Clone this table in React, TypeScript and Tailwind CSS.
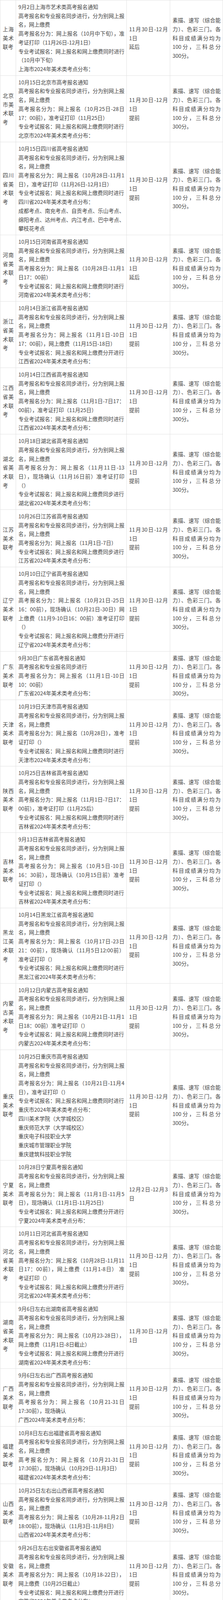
const SYNC = ["高考报名和专业报名同步进行，分为别网上报", "名，网上缴费"];
const SCORE = ["素描、速写（综合能", "力）、色彩三门。各", "科目成绩满分均为", "100分，三科总分", "300分。"];
const D1 = ["11月30日-12月", "1日"];
const D2 = ["12月2日-12月3", "日"];

type Row = {
  name: string[];
  info: string[][];
  date: string[];
  note?: string;
};

const rows: Row[] = [
  {
    name: ["上海", "美术", "联考"],
    info: [
      ["9月2日上海市艺术类高考报名通知"],
      SYNC,
      ["高考报名分为：网上报名（10月中下旬），准", "考证打印（11月26日-12月1日）"],
      ["专业考试报名：网上报名和网上缴费同时进行", "（10月中下旬）"],
      ["上海市2024年美术类考点分布："],
    ],
    date: D1,
    note: "延后",
  },
  {
    name: ["北京", "市美", "术联", "考"],
    info: [
      ["10月15日北京市高考报名通知"],
      SYNC,
      ["高考报名分为：网上报名（10月25日-28日", "17：00前），准考证打印（11月25日）"],
      ["专业考试报名：网上报名和网上缴费同时进行"],
      ["北京市2024年美术类考点分布："],
    ],
    date: D1,
    note: "提前",
  },
  {
    name: ["四川", "省美", "术联", "考"],
    info: [
      ["10月15日四川省高考报名通知"],
      SYNC,
      ["高考报名分为：网上报名（10月28日-11月1", "日），准考证打印（11月26日-12月1日）"],
      ["专业考试报名：网上报名和网上缴费同时进行"],
      ["四川省2024年美术类考点分布："],
      ["成都考点、南充考点、自贡考点、乐山考点、", "绵阳考点、达州考点、内江考点、巴中考点、", "攀枝花考点"],
    ],
    date: D1,
    note: "提前",
  },
  {
    name: ["河南", "省美", "术联", "考"],
    info: [
      ["10月15日河南省高考报名通知"],
      SYNC,
      ["高考报名分为：网上报名（10月28日-11月1", "日17：00前）"],
      ["专业考试报名：网上报名和网上缴费同时进行"],
      ["河南省2024年美术类考点分布："],
    ],
    date: D1,
    note: "延后",
  },
  {
    name: ["浙江", "省美", "术联", "考"],
    info: [
      ["10月14日浙江省高考报名通知"],
      SYNC,
      ["高考报名分为：网上报名（11月1日-10日", "17：00前），网上缴费（11月15日-18日）"],
      ["专业考试报名：网上报名和网上缴费分开进行"],
      ["江西省2024年美术类考点分布："],
    ],
    date: D1,
    note: "提前",
  },
  {
    name: ["江西", "省美", "术联", "考"],
    info: [
      ["10月14日江西省高考报名通知"],
      SYNC,
      ["高考报名分为：网上报名（11月1日-7日17：", "00前），准考证打印（11月25日）"],
      ["专业考试报名：网上报名和网上缴费同时进行"],
      ["江西省2024年美术类考点分布："],
    ],
    date: D1,
    note: "提前",
  },
  {
    name: ["湖北", "省美", "术联", "考"],
    info: [
      ["10月18日湖北省高考报名通知"],
      SYNC,
      ["高考报名分为：网上报名（11月11日-13", "日），现场确认（11月16日前）准考证打印", "（）"],
      ["专业考试报名：网上报名和网上缴费同步进行"],
      ["湖北省2024年美术类考点分布："],
    ],
    date: D1,
    note: "提前",
  },
  {
    name: ["江苏", "美术", "联考"],
    info: [
      ["10月26日江苏省高考报名通知"],
      SYNC,
      ["高考报名分为：网上报名（11月1日-7日）"],
      ["专业考试报名：网上报名和网上缴费同步进行"],
      ["江苏省2024年美术类考点分布："],
    ],
    date: D1,
    note: "提前",
  },
  {
    name: ["辽宁", "美术", "联考"],
    info: [
      ["10月10日辽宁省高考报名通知"],
      SYNC,
      [
        "高考报名分为：网上报名（10月21日-25日",
        "16：00前），现场确认（10月21日-30日）网",
        "上缴费（11月9-10日16：00前）准考证打印",
        "（）",
      ],
      ["专业考试报名：网上报名和网上缴费分开进行"],
      ["辽宁省2024年美术类考点分布："],
    ],
    date: D1,
    note: "提前",
  },
  {
    name: ["广东", "美术", "联考"],
    info: [
      ["9月30日广东省高考报名通知"],
      ["高考报名和专业报名同步进行"],
      ["高考报名分为：网上报名（11月1日-10日", "10：00前）"],
      ["广东省2024年美术类考点分布："],
    ],
    date: D1,
    note: "提前",
  },
  {
    name: ["天津", "美术", "联考"],
    info: [
      ["10月19日天津市高考报名通知"],
      SYNC,
      ["高考报名分为：网上报名（10月28日），准考", "证打印（）"],
      ["专业考试报名：网上报名和网上缴费同时进行"],
      ["天津市2024年美术类考点分布："],
    ],
    date: D1,
    note: "提前",
  },
  {
    name: ["陕西", "美术", "联考"],
    info: [
      ["10月25日吉林省高考报名通知"],
      SYNC,
      ["高考报名分为：网上报名（11月1日-7日17：", "00前），准考证打印（11月25后）"],
      ["专业考试报名：网上报名和网上缴费同时进行"],
      ["吉林省2024年美术类考点分布："],
    ],
    date: D1,
    note: "提前",
  },
  {
    name: ["吉林", "美术", "联考"],
    info: [
      ["9月13日吉林省高考报名通知"],
      SYNC,
      ["高考报名分为：网上报名（10月5日-10日", "16：30前），现场确认（10月15日前）准考", "证打印（）"],
      ["专业考试报名：网上报名和网上缴费同时进行"],
      ["吉林省2024年美术类考点分布："],
    ],
    date: D1,
    note: "提前",
  },
  {
    name: ["黑龙", "江美", "术联", "考"],
    info: [
      ["10月14日黑龙江省高考报名通知"],
      SYNC,
      ["高考报名分为：网上报名（10月17日-23日", "21：00前），现场确认（11月5日12:00前）", "准考证打印（）"],
      ["专业考试报名：网上报名和网上缴费同时进行"],
      ["黑龙江省2024年美术类考点分布："],
    ],
    date: D1,
    note: "提前",
  },
  {
    name: ["内蒙", "古美", "术联", "考"],
    info: [
      ["10月12日内蒙古高考报名通知"],
      SYNC,
      ["高考报名分为：网上报名（10月21日-11月1", "日18：00前）准考证打印（）"],
      ["专业考试报名：网上报名和网上缴费同时进行"],
      ["内蒙古2024年美术类考点分布："],
    ],
    date: D1,
    note: "提前",
  },
  {
    name: ["重庆", "美术", "联考"],
    info: [
      ["10月25日重庆市高考报名通知"],
      SYNC,
      ["高考报名分为：网上报名（10月21日-11月4", "日），准考证打印（）"],
      ["专业考试报名：网上报名和网上缴费同时进行"],
      ["重庆市2024年美术类考点分布："],
      ["四川美术学院（大学城校区）"],
      ["重庆师范大学（大学城校区）"],
      ["重庆电子科技职业大学"],
      ["重庆城市管理职业学院"],
      ["重庆建筑科技职业学院"],
    ],
    date: D1,
    note: "提前",
  },
  {
    name: ["宁夏", "美术", "联考"],
    info: [
      ["10月28日宁夏高考报名通知"],
      SYNC,
      ["高考报名分为：网上报名（11月1日-11月5", "日），现场确认（11月1日-11月25日）"],
      ["专业考试报名：网上报名和网上缴费分开进行"],
      ["宁夏2024年美术类考点分布："],
    ],
    date: D2,
  },
  {
    name: ["河北", "省美", "术联", "考"],
    info: [
      ["10月11日河北省高考报名通知"],
      SYNC,
      ["高考报名分为：网上报名（10月28日-11月11", "日17：00前），网上缴费（11月1-8日） 准", "考证打印（）"],
      ["专业考试报名：网上报名和网上缴费分开进行"],
      ["河北省2024年美术类考点分布："],
    ],
    date: D1,
    note: "提前",
  },
  {
    name: ["湖南", "省美", "术联", "考"],
    info: [
      ["9月6日左右出湖南省高考报名通知"],
      SYNC,
      ["高考报名分为：网上报名（10月23-28日），", "网上缴费（11月1日-8日截止）"],
      ["专业考试报名：网上报名和网上缴费分开进行"],
      ["湖南省2024年美术类考点分布："],
    ],
    date: D1,
  },
  {
    name: ["广西", "美术", "联考"],
    info: [
      ["9月6日左右出广西高考报名通知"],
      SYNC,
      ["高考报名分为：网上报名（10月21-31日", "17:30前），现场确认"],
      ["广西2024年美术类考点分布："],
    ],
    date: D1,
    note: "提前",
  },
  {
    name: ["福建", "美术", "联考"],
    info: [
      ["10月8日左右出福建省高考报名通知"],
      SYNC,
      ["高考报名分为：网上报名（10月21-31日", "17:30前），现场确认（10月29日-11月3日）"],
      ["福建省2024年美术类考点分布："],
    ],
    date: D1,
    note: "提前",
  },
  {
    name: ["山西", "美术", "联考"],
    info: [
      ["10月25日左右出山西省高考报名通知"],
      SYNC,
      ["高考报名分为：网上报名（10月28-11月2日", "18:00前），现场确认（11月3日-11月8日）"],
      ["山西省2024年美术类考点分布："],
    ],
    date: D1,
    note: "提前",
  },
  {
    name: ["安徽", "美术", "联考"],
    info: [
      ["9月26日左右出安徽省高考报名通知"],
      SYNC,
      ["高考报名分为：网上报名（10月18-22日），", "网上缴费（10月25日截止）"],
      ["专业考试报名：网上报名和网上缴费分开进行"],
      ["安徽省2024年美术类考点分布："],
    ],
    date: D1,
    note: "提前",
  },
  {
    name: ["云南", "美术", "联考"],
    info: [
      ["10月7日左右出云南省高考报名通知"],
      SYNC,
      ["高考报名分为：网上报名（10月21-11月1", "日），现场确认"],
      ["云南省2024年美术类考点分布："],
    ],
    date: D1,
    note: "提前",
  },
  {
    name: ["山东", "美术", "联考"],
    info: [
      ["10月18日左右出山东省高考报名通知"],
      SYNC,
      ["高考报名分为：网上报名（10月23-29日），", "现场确认（10月30日-11月11日）网上缴费", "（11月12-16日日截止）"],
      ["专业考试报名：网上报名和网上缴费分开进行"],
      ["山东省2024年美术类考点分布：\""],
    ],
    date: D1,
    note: "提前",
  },
  {
    name: ["贵州", "美术", "联考"],
    info: [
      ["10月29日左右出贵州省省高考报名通知"],
      SYNC,
      ["高考报名分为：网上报名（11月1-10日）"],
      ["专业考试报名：网上报名和网上缴费分开进行"],
      ["贵州省2024年美术类考点分布：\""],
    ],
    date: D2,
  },
  {
    name: ["青海", "美术", "联考"],
    info: [
      ["10月25日左右出青海省高考报名通知"],
      SYNC,
      ["高考报名分为：网上报名（11月1-11月15日", "18:00前）"],
      ["青海省2024年美术类考点分布："],
    ],
    date: ["12月28日-12月", "29日"],
  },
  {
    name: ["西藏", "美术", "联考"],
    info: [
      ["11月8日左右出西藏高考报名通知"],
      SYNC,
      ["高考报名分为：网上报名（11月9-18日）"],
      ["西藏2024年美术类考点分布："],
    ],
    date: D1,
    note: "提前",
  },
  {
    name: ["海南", "美术", "联考"],
    info: [
      ["10月11日左右出海南省高考报名通知"],
      SYNC,
      ["高考报名分为：现场确认（10月24-28日），", "网上报名（10月24-29日）、网上缴费（11月", "1日截止）"],
      ["专业考试报名：网上报名和网上缴费分开进行"],
      ["海南省2024年美术类考点分布："],
    ],
    date: D1,
    note: "提前",
  },
  {
    name: ["甘肃", "美术", "联考"],
    info: [
      ["10月18日左右出甘肃省高考报名通知"],
      SYNC,
      ["高考报名分为：网上报名（10月21-27日）现", "场确认（11月5日前）"],
      ["甘肃省2024年美术类考点分布："],
    ],
    date: D1,
    note: "提前",
  },
  {
    name: ["新疆", "美术", "联考"],
    info: [
      ["10月9日左右出新疆高考报名通知"],
      SYNC,
      ["高考报名分为：网上报名（10月20-11月10", "日）"],
      ["新疆2024年美术类考点分布："],
    ],
    date: D1,
    note: "提前",
  },
];

// one paragraph, already broken into the lines of the picture;
// every line but the last is stretched edge to edge
function Para({ lines }: { lines: string[] }) {
  return (
    <>
      {lines.map((l, i) => (
        <div
          key={i}
          className={
            i < lines.length - 1
              ? "whitespace-nowrap text-justify [text-align-last:justify]"
              : "whitespace-nowrap"
          }
        >
          {l}
        </div>
      ))}
    </>
  );
}

const cell = "flex min-w-0 flex-col justify-center border-r border-b border-[#e2e2e2] pl-[6px] pr-[5px] py-[5px]";

export default function App() {
  return (
    <div className="w-[570px] bg-white font-[family-name:'Noto_Sans_CJK_SC',sans-serif] text-[13.5px] leading-[22.72px] text-[#444]">
      <div className="border-t border-l border-[#e2e2e2]">
        {rows.map((r, idx) => (
          <div key={idx} className="grid grid-cols-[40px_283px_111px_135px]">
            <div className={cell}>
              <Para lines={r.name} />
            </div>
            <div className={cell}>
              {r.info.map((p, j) => (
                <Para key={j} lines={p} />
              ))}
            </div>
            <div className={cell}>
              <Para lines={r.date} />
              {r.note && <div>{r.note}</div>}
            </div>
            <div className={cell}>
              <Para lines={SCORE} />
            </div>
          </div>
        ))}
      </div>
    </div>
  );
}
